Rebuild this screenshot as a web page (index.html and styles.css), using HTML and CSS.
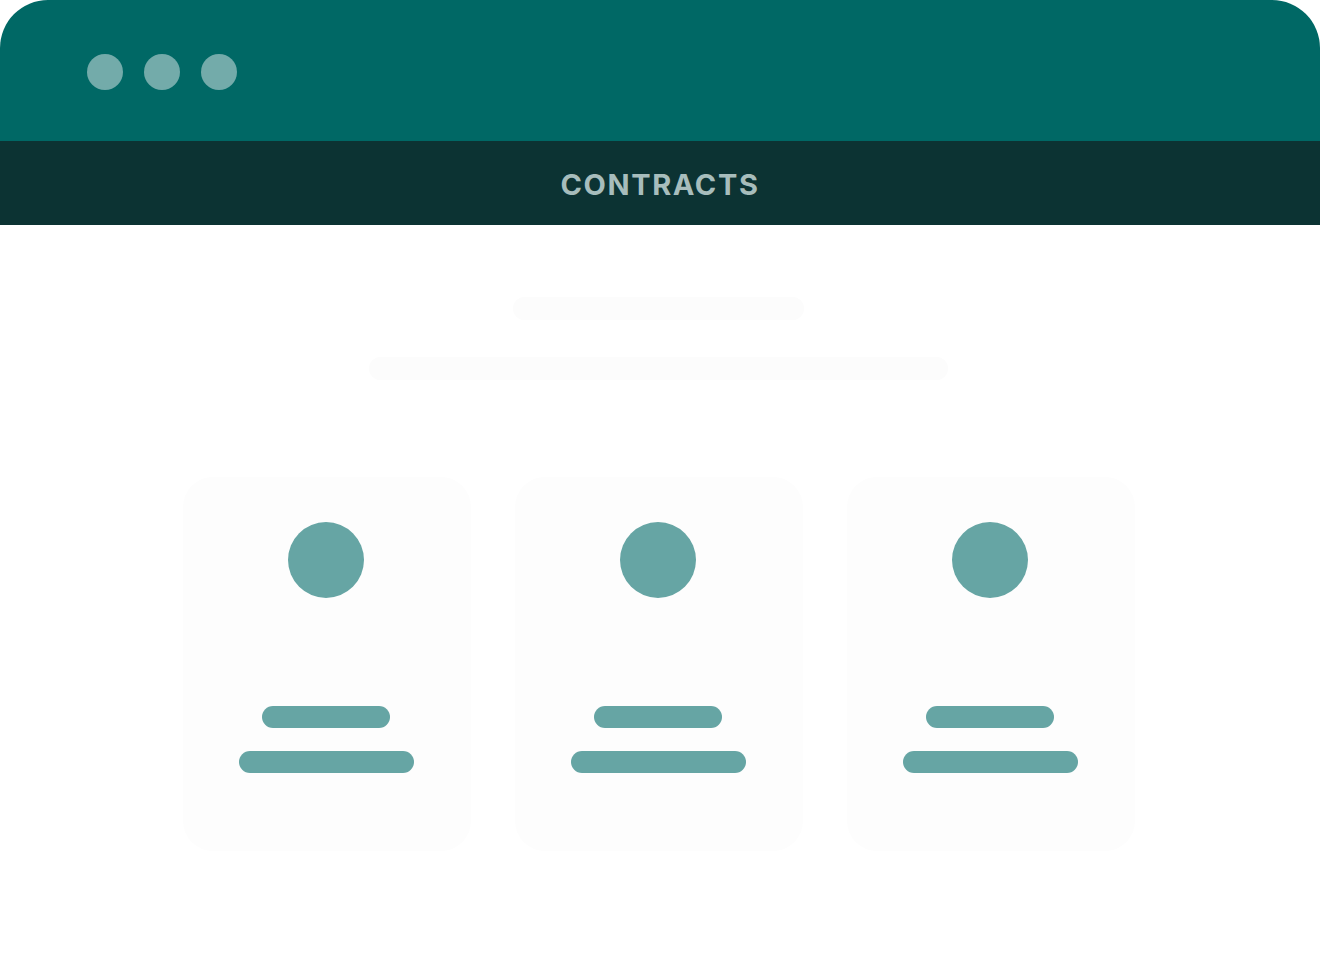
FILE: index.html
```html
<!DOCTYPE html>
<html lang="en">
<head>
<meta charset="utf-8">
<title>Contracts</title>
<link rel="stylesheet" href="styles.css">
</head>
<body>
  <header class="window-bar">
    <div class="dots">
      <span class="dot"></span>
      <span class="dot"></span>
      <span class="dot"></span>
    </div>
  </header>
  <nav class="title-bar">
    <h1 class="title">CONTRACTS</h1>
  </nav>
  <main class="content">
    <div class="heading-lines">
      <div class="ghost ghost-short"></div>
      <div class="ghost ghost-long"></div>
    </div>
    <section class="cards">
      <article class="card">
        <div class="avatar"></div>
        <div class="lines">
          <div class="line line-short"></div>
          <div class="line line-long"></div>
        </div>
      </article>
      <article class="card">
        <div class="avatar"></div>
        <div class="lines">
          <div class="line line-short"></div>
          <div class="line line-long"></div>
        </div>
      </article>
      <article class="card">
        <div class="avatar"></div>
        <div class="lines">
          <div class="line line-short"></div>
          <div class="line line-long"></div>
        </div>
      </article>
    </section>
  </main>
</body>
</html>
```
FILE: styles.css
```css
* { box-sizing: border-box; }

html, body {
  margin: 0;
  padding: 0;
  background: #ffffff;
  font-family: Inter, "Noto Sans", "Liberation Sans", sans-serif;
}

.window-bar {
  height: 141px;
  background: #006865;
  border-radius: 48px 48px 0 0;
  display: flex;
  align-items: flex-start;
  padding: 54px 0 0 87px;
}

.dots {
  display: flex;
  gap: 21px;
}

.dot {
  width: 36px;
  height: 36px;
  border-radius: 50%;
  background: #73abaa;
}

.title-bar {
  height: 84px;
  background: #0c3333;
  display: flex;
  align-items: center;
  justify-content: center;
}

.title {
  margin: 0;
  font-size: 29px;
  font-weight: 700;
  letter-spacing: 1.6px;
  color: #a7bdbc;
  line-height: 1;
  padding-top: 2px;
}

.content {
  display: flex;
  flex-direction: column;
  align-items: center;
  padding-top: 72px;
  padding-right: 3px;
}

.heading-lines {
  display: flex;
  flex-direction: column;
  align-items: center;
  gap: 37px;
}

.ghost {
  height: 23px;
  border-radius: 12px;
  background: #fcfcfc;
}

.ghost-short { width: 291px; }
.ghost-long { width: 579px; }

.cards {
  display: flex;
  gap: 44px;
  margin-top: 97px;
}

.card {
  width: 288px;
  height: 374px;
  border-radius: 30px;
  background: #fdfdfd;
  display: flex;
  flex-direction: column;
  align-items: center;
  padding-top: 45px;
  padding-right: 1px;
}

.avatar {
  width: 76px;
  height: 76px;
  border-radius: 50%;
  background: #66a5a4;
}

.lines {
  margin-top: 108px;
  display: flex;
  flex-direction: column;
  align-items: center;
  gap: 23px;
}

.line {
  height: 22px;
  border-radius: 11px;
  background: #66a5a4;
}

.line-short { width: 128px; }
.line-long { width: 175px; }
```
